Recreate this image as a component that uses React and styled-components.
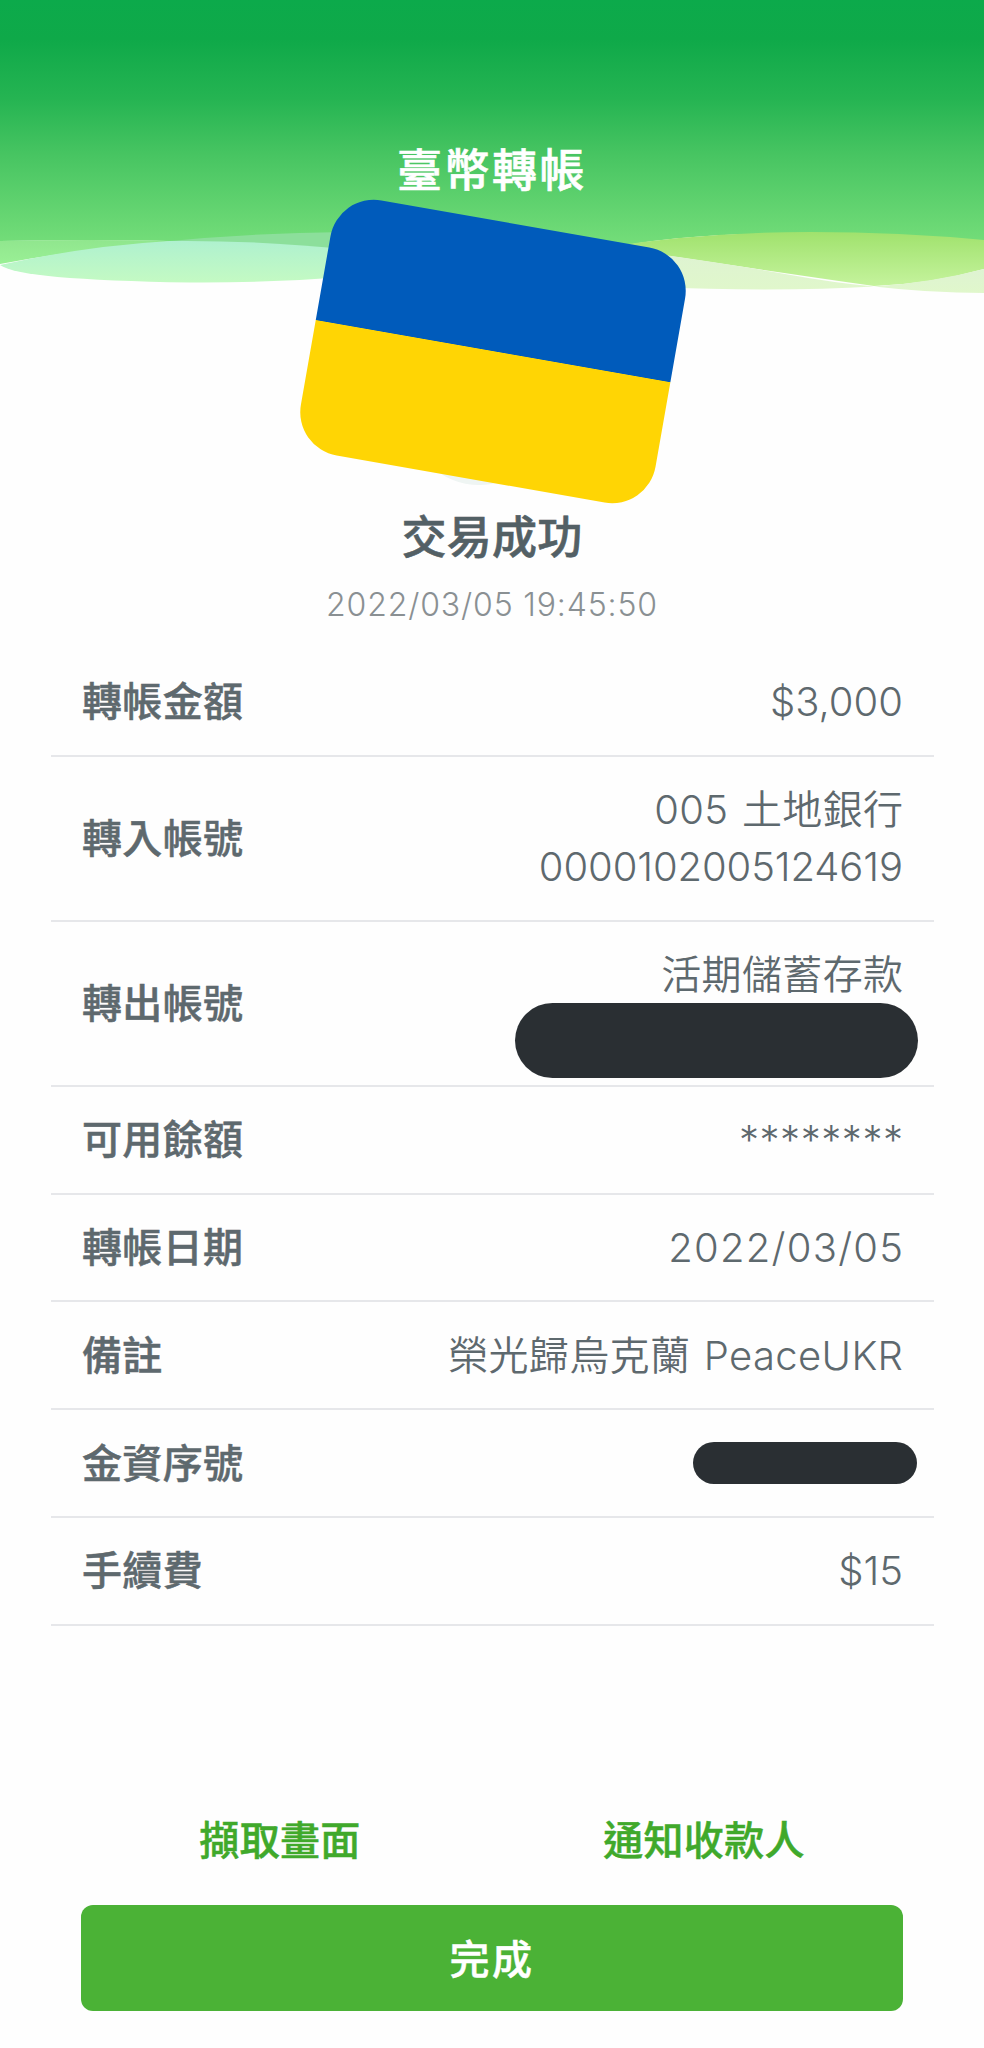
import React from 'react';
import styled, { createGlobalStyle } from 'styled-components';

const GlobalStyle = createGlobalStyle`
    * {
        box-sizing: border-box;
    }

    body {
        margin: 0;
        background-color: #fefefe;
        font-family: Inter, 'Noto Sans CJK TC', sans-serif;
    }
`;

const Page = styled.div`
    width: 984px;
    height: 2048px;
    margin: 0 auto;
    display: flex;
    flex-direction: column;
    position: relative;
    overflow: hidden;
`;

const Backdrop = styled.svg`
    position: absolute;
    top: 0;
    left: 0;
    width: 984px;
    height: 300px;
`;

const Header = styled.header`
    height: 222px;
    padding-top: 138px;
    position: relative;
    text-align: center;
`;

const Title = styled.h1`
    margin: 0;
    color: #fff;
    font-size: 45px;
    line-height: 66px;
    font-weight: 500;
    letter-spacing: 2.5px;
    -webkit-text-stroke: 0.6px #fff;
`;

const Hero = styled.div`
    height: 259px;
    display: flex;
    justify-content: center;
    position: relative;
    padding-left: 2px;
`;

// Only its lower rim shows under the flag
const StatusRing = styled.div`
    position: absolute;
    left: 409px;
    bottom: -4px;
    width: 140px;
    height: 140px;
    border-radius: 50%;
    background-color: #eff5f3;
`;

const Flag = styled.div`
    width: 360px;
    height: 259px;
    border-radius: 44px;
    background: linear-gradient(#005bbb 49.7%, #ffd504 50%);
    transform: rotate(9.95deg);
`;

const Status = styled.div`
    height: 168px;
    padding-top: 24px;
    text-align: center;
`;

const StatusText = styled.h2`
    margin: 0;
    color: #536065;
    font-size: 45px;
    line-height: 66px;
    font-weight: 500;
    letter-spacing: 0.3px;
    -webkit-text-stroke: 0.6px #536065;
`;

const StatusTime = styled.div`
    color: #8a9093;
    font-size: 32px;
    line-height: 40px;
    font-weight: 300;
    margin-top: 14px;
    letter-spacing: 0.85px;
`;

const Details = styled.dl`
    margin: 0 50px 0 51px;
`;

const Row = styled.div`
    height: ${({ $tall }) => ($tall ? '165px' : '107.8px')};
    padding: 0 31px;
    display: flex;
    justify-content: space-between;
    align-items: center;
    border-bottom: 2px solid #e6e7ea;
    color: #5e696e;
    font-size: 40px;
    line-height: 57px;
`;

const Label = styled.dt`
    font-weight: 500;
    letter-spacing: 0.35px;
    -webkit-text-stroke: 0.5px #5e696e;
`;

const Value = styled.dd`
    margin: 0;
    display: flex;
    flex-direction: column;
    align-items: flex-end;
    font-weight: 350;
`;

const Line = styled.span`
    letter-spacing: ${({ $spacing }) => $spacing || 0}px;
    margin-right: ${({ $spacing }) => -($spacing || 0)}px;
    word-spacing: 2px;
`;

const Mask = styled.span`
    width: ${({ $large }) => ($large ? '403px' : '224px')};
    height: ${({ $large }) => ($large ? '75px' : '42px')};
    margin: ${({ $large }) => ($large ? '0 -15px -18px 0' : '0 -14px 0 0')};
    border-radius: 38px;
    background-color: #2a2f33;
`;

const Actions = styled.div`
    margin-top: auto;
    padding: 0 68px;
    display: grid;
    grid-template-columns: 1fr 1fr;
`;

const TextButton = styled.button`
    border: 0;
    padding: 0;
    background: none;
    color: #40a92b;
    font-family: inherit;
    font-size: 40px;
    line-height: 60px;
    font-weight: 500;
    letter-spacing: 0.35px;
    -webkit-text-stroke: 0.5px #40a92b;
`;

const DoneButton = styled.button`
    margin: 34px 81px 37px;
    height: 106px;
    flex-shrink: 0;
    border: 0;
    border-radius: 12px;
    background-color: #4bb236;
    color: #fff;
    font-family: inherit;
    font-size: 40px;
    font-weight: 500;
    letter-spacing: 2.5px;
    padding-bottom: 3px;
    -webkit-text-stroke: 0.5px #fff;
`;

const rows = [
    { label: '轉帳金額', lines: [{ text: '$3,000' }] },
    {
        label: '轉入帳號',
        tall: true,
        lines: [{ text: '005 土地銀行', spacing: 0.35 }, { text: '0000102005124619', spacing: -0.1 }],
    },
    { label: '轉出帳號', tall: true, lines: [{ text: '活期儲蓄存款', spacing: 0.35 }], mask: 'large' },
    { label: '可用餘額', lines: [{ text: '********', spacing: 0.55 }] },
    { label: '轉帳日期', lines: [{ text: '2022/03/05', spacing: 1.25 }] },
    { label: '備註', lines: [{ text: '榮光歸烏克蘭 PeaceUKR', spacing: 0.35 }] },
    { label: '金資序號', lines: [], mask: 'small' },
    { label: '手續費', lines: [{ text: '$15' }] },
];

const Waves = () => (
    <Backdrop viewBox='0 0 984 300' aria-hidden='true'>
        <defs>
            <linearGradient id='sky' gradientUnits='userSpaceOnUse' x1='0' y1='0' x2='0' y2='246'>
                <stop offset='0' stopColor='#0caa4b' />
                <stop offset='0.16' stopColor='#0fa949' />
                <stop offset='0.4' stopColor='#25b452' />
                <stop offset='0.62' stopColor='#46c461' />
                <stop offset='1' stopColor='#75de7a' />
            </linearGradient>
            <linearGradient id='leaf' x1='0' y1='0' x2='0' y2='1'>
                <stop offset='0' stopColor='#90e68e' />
                <stop offset='1' stopColor='#9af095' />
            </linearGradient>
            <linearGradient id='mint' x1='0' y1='0' x2='0' y2='1'>
                <stop offset='0' stopColor='#aff1cf' />
                <stop offset='1' stopColor='#c4fac3' />
            </linearGradient>
            <linearGradient id='lime' x1='0' y1='0' x2='0' y2='1'>
                <stop offset='0' stopColor='#a0e26d' />
                <stop offset='1' stopColor='#c5f39d' />
            </linearGradient>
            <linearGradient id='pale' x1='0' y1='0' x2='0' y2='1'>
                <stop offset='0' stopColor='#def3d2' />
                <stop offset='1' stopColor='#e0f7cb' />
            </linearGradient>
        </defs>
        <path d='M0 0H984V245Q740 220 600 250L320 248Q200 238 0 241Z' fill='url(#sky)' />
        <path d='M0 241Q90 239 175 241Q80 249 0 264Z' fill='url(#leaf)' />
        <path d='M165 241.500Q250 233 345 232V250Q260 242 165 241.500Z' fill='#8cdf9b' />
        <path d='M0 265Q85 246 170 241Q250 240 345 249V277Q270 283 190 282.500Q20 280 0 265Z' fill='url(#mint)' />
        <path d='M600 248Q700 232 810 232Q900 232 984 240V269Q930 284 874 286Q790 274 677 257L600 248Z' fill='url(#lime)' />
        <path d='M650 253Q730 264 785 274Q835 283 874 286.500Q780 292 650 287Z' fill='url(#pale)' />
        <path d='M874 286.500Q930 283 984 269V293Q930 293 874 286.500Z' fill='url(#pale)' />
    </Backdrop>
);

const App = () => {
    return (
        <>
            <GlobalStyle />
            <Page>
                <Waves />
                <Header>
                    <Title>臺幣轉帳</Title>
                </Header>
                <Hero>
                    <StatusRing />
                    <Flag />
                </Hero>
                <Status>
                    <StatusText>交易成功</StatusText>
                    <StatusTime>2022/03/05 19:45:50</StatusTime>
                </Status>
                <Details>
                    {rows.map(({ label, tall, lines, mask }) => (
                        <Row key={label} $tall={tall}>
                            <Label>{label}</Label>
                            <Value>
                                {lines.map(({ text, spacing }) => (
                                    <Line key={text} $spacing={spacing}>{text}</Line>
                                ))}
                                {mask && <Mask $large={mask === 'large'} />}
                            </Value>
                        </Row>
                    ))}
                </Details>
                <Actions>
                    <TextButton>擷取畫面</TextButton>
                    <TextButton>通知收款人</TextButton>
                </Actions>
                <DoneButton>完成</DoneButton>
            </Page>
        </>
    )
}

export default App
